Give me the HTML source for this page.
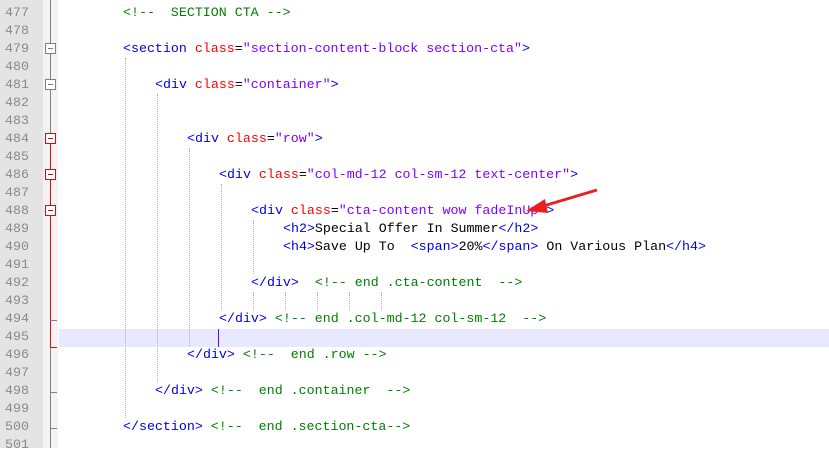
<!DOCTYPE html><html><head><style>
body{margin:0;width:829px;height:448px;overflow:hidden;background:#fff;position:relative;font-family:"Liberation Mono",monospace;font-size:13.3px}
.num{position:absolute;left:0;width:43px;height:448px;background:#e4e4e4}
.fold{position:absolute;left:43px;width:15px;height:448px;background:#f3f3f3}
.ln{position:absolute;left:5px;color:#8a8a8a;line-height:18px;height:18px}
.c{position:absolute;white-space:pre;line-height:18px;height:18px}
.t{color:#0000e0}.a{color:#ff0000}.s{color:#8000ff}.m{color:#008000}.k{color:#000}
.g{position:absolute;width:0;border-left:1px dotted #b0b0b0}
.box{position:absolute;left:45px;width:9px;height:9px;border:1px solid #808080;background:#fff}
.box:after{content:"";position:absolute;left:2px;top:4px;width:5px;height:1px;background:#808080}
.r{border-color:#d01010}.r:after{background:#d01010}
</style></head><body>
<div class="num"></div><div class="fold"></div>
<div style="position:absolute;left:50px;top:0;width:1px;height:448px;background:#808080"></div>
<div style="position:absolute;left:50px;top:142px;width:1px;height:206px;background:#d01010"></div>
<div style="position:absolute;left:50px;top:320px;width:7px;height:1px;background:#808080"></div>
<div style="position:absolute;left:50px;top:347px;width:7px;height:1px;background:#d01010"></div>
<div style="position:absolute;left:50px;top:392px;width:7px;height:1px;background:#808080"></div>
<div style="position:absolute;left:50px;top:428px;width:7px;height:1px;background:#808080"></div>
<div style="position:absolute;left:59px;top:329px;width:770px;height:18px;background:#e8e8ff"></div>
<div style="position:absolute;left:218px;top:329px;width:1px;height:18px;background:#8000c0"></div>
<div class="box" style="top:43px"></div><div class="box" style="top:79px"></div>
<div class="box r" style="top:133px"></div><div class="box r" style="top:169px"></div><div class="box r" style="top:205px"></div>
<div class="g" style="left:125px;top:58px;height:360px"></div>
<div class="g" style="left:157px;top:94px;height:288px"></div>
<div class="g" style="left:189px;top:148px;height:198px"></div>
<div class="g" style="left:221px;top:184px;height:126px"></div>
<div class="g" style="left:253px;top:220px;height:54px"></div>
<div class="g" style="left:253px;top:292px;height:18px"></div>
<div class="g" style="left:285px;top:292px;height:18px"></div>
<div class="g" style="left:317px;top:292px;height:18px"></div>
<div class="g" style="left:349px;top:292px;height:18px"></div>
<div class="g" style="left:381px;top:292px;height:18px"></div>
<div class="ln" style="top:4px">477</div><div class="ln" style="top:22px">478</div><div class="ln" style="top:40px">479</div><div class="ln" style="top:58px">480</div><div class="ln" style="top:76px">481</div><div class="ln" style="top:94px">482</div><div class="ln" style="top:112px">483</div><div class="ln" style="top:130px">484</div><div class="ln" style="top:148px">485</div><div class="ln" style="top:166px">486</div><div class="ln" style="top:184px">487</div><div class="ln" style="top:202px">488</div><div class="ln" style="top:220px">489</div><div class="ln" style="top:238px">490</div><div class="ln" style="top:256px">491</div><div class="ln" style="top:274px">492</div><div class="ln" style="top:292px">493</div><div class="ln" style="top:310px">494</div><div class="ln" style="top:328px">495</div><div class="ln" style="top:346px">496</div><div class="ln" style="top:364px">497</div><div class="ln" style="top:382px">498</div><div class="ln" style="top:400px">499</div><div class="ln" style="top:418px">500</div><div class="ln" style="top:436px">501</div>
<div class="c m" style="left:123px;top:4px">&lt;!--  SECTION CTA --&gt;</div>
<div class="c" style="left:123px;top:40px"><span class="t">&lt;section</span> <span class="a">class</span><span class="k">=</span><span class="s">"section-content-block section-cta"</span><span class="t">&gt;</span></div>
<div class="c" style="left:155px;top:76px"><span class="t">&lt;div</span> <span class="a">class</span><span class="k">=</span><span class="s">"container"</span><span class="t">&gt;</span></div>
<div class="c" style="left:187px;top:130px"><span class="t">&lt;div</span> <span class="a">class</span><span class="k">=</span><span class="s">"row"</span><span class="t">&gt;</span></div>
<div class="c" style="left:219px;top:166px"><span class="t">&lt;div</span> <span class="a">class</span><span class="k">=</span><span class="s">"col-md-12 col-sm-12 text-center"</span><span class="t">&gt;</span></div>
<div class="c" style="left:251px;top:202px"><span class="t">&lt;div</span> <span class="a">class</span><span class="k">=</span><span class="s">"cta-content wow fadeInUp"</span><span class="t">&gt;</span></div>
<div class="c" style="left:283px;top:220px"><span class="t">&lt;h2&gt;</span><span class="k">Special Offer In Summer</span><span class="t">&lt;/h2&gt;</span></div>
<div class="c" style="left:283px;top:238px"><span class="t">&lt;h4&gt;</span><span class="k">Save Up To  </span><span class="t">&lt;span&gt;</span><span class="k">20%</span><span class="t">&lt;/span&gt;</span><span class="k"> On Various Plan</span><span class="t">&lt;/h4&gt;</span></div>
<div class="c" style="left:251px;top:274px"><span class="t">&lt;/div&gt;</span>  <span class="m">&lt;!-- end .cta-content  --&gt;</span></div>
<div class="c" style="left:219px;top:310px"><span class="t">&lt;/div&gt;</span> <span class="m">&lt;!-- end .col-md-12 col-sm-12  --&gt;</span></div>
<div class="c" style="left:187px;top:346px"><span class="t">&lt;/div&gt;</span> <span class="m">&lt;!--  end .row --&gt;</span></div>
<div class="c" style="left:155px;top:382px"><span class="t">&lt;/div&gt;</span> <span class="m">&lt;!--  end .container  --&gt;</span></div>
<div class="c" style="left:123px;top:418px"><span class="t">&lt;/section&gt;</span> <span class="m">&lt;!--  end .section-cta--&gt;</span></div>
<svg style="position:absolute;left:0;top:0" width="829" height="448"><line x1="597" y1="190" x2="540" y2="207" stroke="#e82020" stroke-width="3"/><polygon points="526,211 545,199 548,213" fill="#e82020"/></svg>
</body></html>
